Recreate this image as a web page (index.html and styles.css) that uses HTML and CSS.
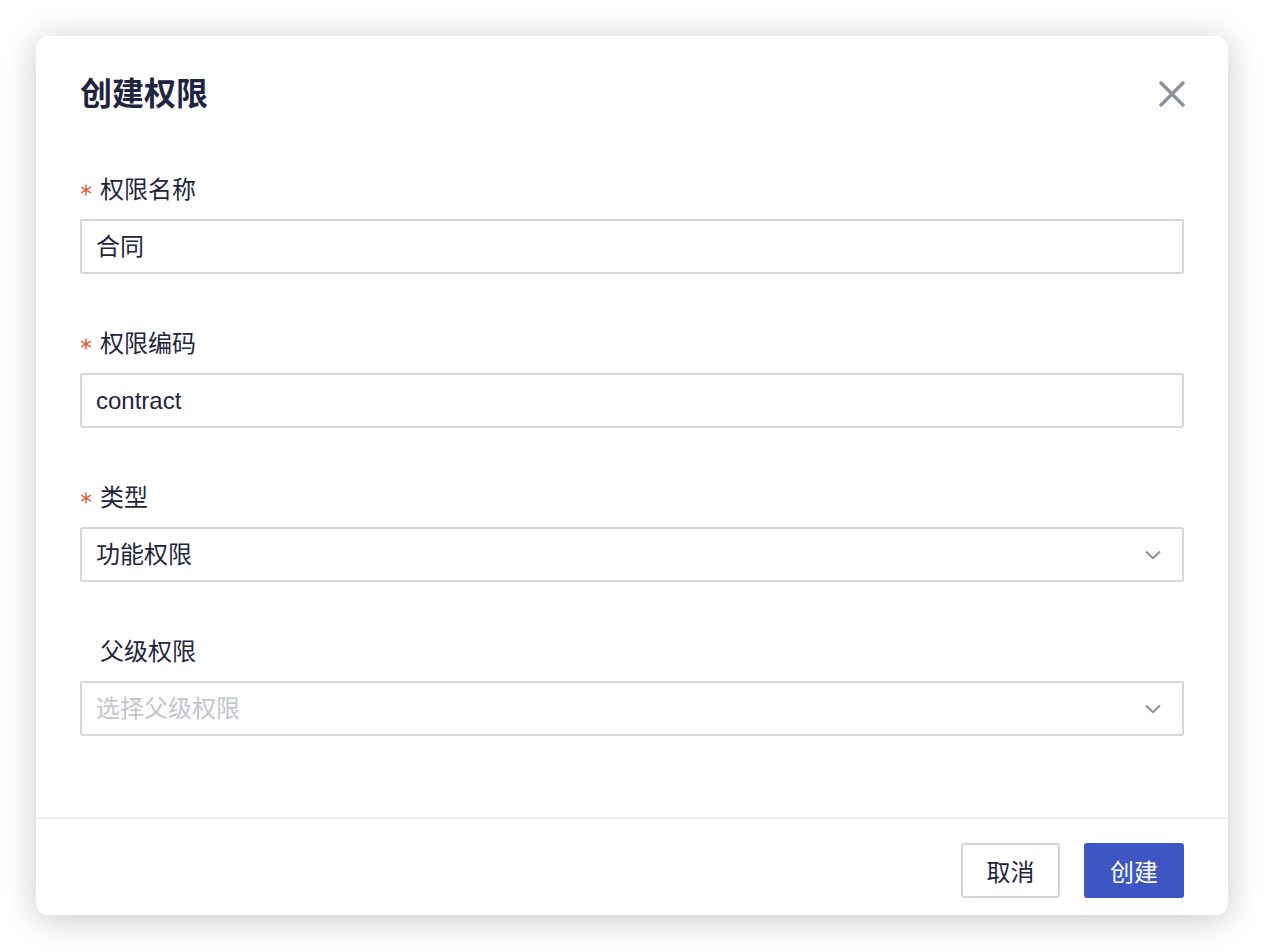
FILE: index.html
```html
<!DOCTYPE html>
<html lang="zh-CN">
<head>
<meta charset="utf-8">
<title>创建权限</title>
<link rel="stylesheet" href="styles.css">
</head>
<body>
<div class="page">
  <div class="modal">
    <div class="modal-header">
      <h1 class="modal-title">创建权限</h1>
      <button class="close-btn" type="button" aria-label="关闭">
        <svg width="28" height="28" viewBox="0 0 28 28"><path d="M2 2 L26 26 M26 2 L2 26" stroke="#8c909b" stroke-width="3.2" stroke-linecap="butt" fill="none"/></svg>
      </button>
    </div>
    <div class="modal-body">
      <div class="field">
        <div class="label">
          <span class="req"><svg width="12" height="12" viewBox="0 0 12 12"><path d="M6 0.5 V11.5 M1.2 3.2 L10.8 8.8 M1.2 8.8 L10.8 3.2" stroke="#e4573d" stroke-width="1.4" fill="none"/></svg></span>
          <span class="label-text">权限名称</span>
        </div>
        <div class="input"><span class="value">合同</span></div>
      </div>
      <div class="field">
        <div class="label">
          <span class="req"><svg width="12" height="12" viewBox="0 0 12 12"><path d="M6 0.5 V11.5 M1.2 3.2 L10.8 8.8 M1.2 8.8 L10.8 3.2" stroke="#e4573d" stroke-width="1.4" fill="none"/></svg></span>
          <span class="label-text">权限编码</span>
        </div>
        <div class="input"><span class="value">contract</span></div>
      </div>
      <div class="field">
        <div class="label">
          <span class="req"><svg width="12" height="12" viewBox="0 0 12 12"><path d="M6 0.5 V11.5 M1.2 3.2 L10.8 8.8 M1.2 8.8 L10.8 3.2" stroke="#e4573d" stroke-width="1.4" fill="none"/></svg></span>
          <span class="label-text">类型</span>
        </div>
        <div class="input select"><span class="value">功能权限</span>
          <svg class="chev" width="16" height="10" viewBox="0 0 16 10"><path d="M1 1.5 L8 8.2 L15 1.5" stroke="#8a8f9b" stroke-width="2" fill="none"/></svg>
        </div>
      </div>
      <div class="field">
        <div class="label">
          <span class="req"></span>
          <span class="label-text">父级权限</span>
        </div>
        <div class="input select"><span class="value placeholder">选择父级权限</span>
          <svg class="chev" width="16" height="10" viewBox="0 0 16 10"><path d="M1 1.5 L8 8.2 L15 1.5" stroke="#8a8f9b" stroke-width="2" fill="none"/></svg>
        </div>
      </div>
    </div>
    <div class="modal-footer">
      <button class="btn btn-default" type="button">取消</button>
      <button class="btn btn-primary" type="button">创建</button>
    </div>
  </div>
</div>
</body>
</html>
```
FILE: styles.css
```css
* { box-sizing: border-box; }
html, body { margin: 0; padding: 0; background: #ffffff; }
body {
  font-family: "Liberation Sans", "Noto Sans CJK SC", sans-serif;
  color: #1f2540;
  width: 1264px;
  height: 952px;
  overflow: hidden;
}
.page {
  padding: 36px;
}
.modal {
  width: 1192px;
  height: 879px;
  background: #fff;
  border-radius: 12px;
  box-shadow: 0 4px 34px rgba(0, 0, 0, 0.22);
  display: flex;
  flex-direction: column;
}
.modal-header {
  display: flex;
  align-items: center;
  justify-content: space-between;
  padding: 40px 42px 0 44px;
}
.modal-title {
  margin: 0;
  font-size: 32px;
  line-height: 36px;
  font-weight: 700;
  color: #1f2540;
}
.close-btn {
  border: 0;
  background: none;
  padding: 0;
  width: 28px;
  height: 28px;
  display: flex;
}
.modal-body {
  flex: 1;
  padding: 62px 44px 0 44px;
  display: flex;
  flex-direction: column;
  gap: 54px;
}
.field {
  display: flex;
  flex-direction: column;
}
.label {
  display: flex;
  align-items: center;
  height: 32px;
  margin-bottom: 13px;
  font-size: 24px;
}
.req {
  width: 20px;
  display: flex;
  align-items: center;
}
.label-text { line-height: 32px; }
.input {
  height: 55px;
  border: 2px solid #d5d6db;
  border-radius: 3px;
  padding: 0 20px 0 14px;
  display: flex;
  align-items: center;
  font-size: 24px;
}
.value { flex: 1; line-height: 32px; }
.placeholder { color: #c2c4cc; }
.chev { margin-right: 1px; }
.modal-footer {
  border-top: 2px solid #eeeef0;
  padding: 24px 44px 17px;
  display: flex;
  justify-content: flex-end;
  gap: 24px;
}
.btn {
  height: 55px;
  font-family: "Liberation Sans", "Noto Sans CJK SC", sans-serif;
  font-size: 24px;
  border-radius: 3px;
  padding: 0;
}
.btn-default {
  width: 99px;
  background: #fff;
  border: 2px solid #d4d5da;
  color: #1f2540;
}
.btn-primary {
  width: 100px;
  background: #3d56c4;
  border: 0;
  color: #fff;
}
```
